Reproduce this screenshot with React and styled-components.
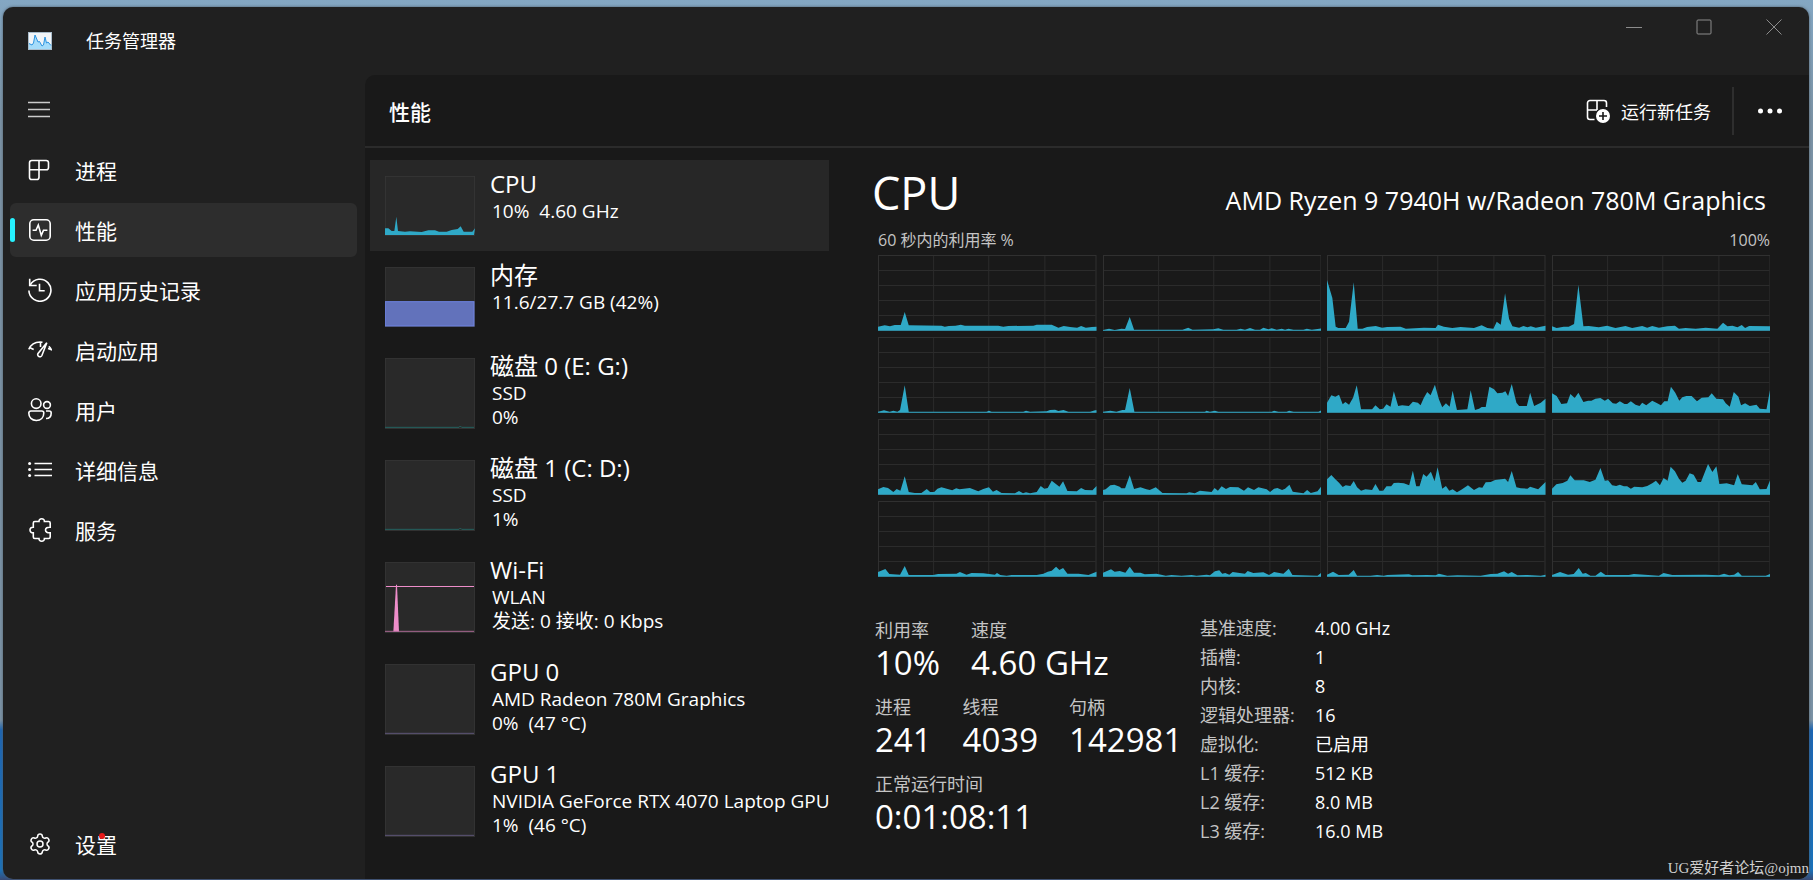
import React, { useState } from 'react';
import styled, { createGlobalStyle, css } from 'styled-components';
import { Settings } from 'lucide-react';

const GlobalStyle = createGlobalStyle`
    * { box-sizing: border-box; }
    body {
        margin: 0;
        background: linear-gradient(#84a7c3 0, #7c93a5 120px, #7c93a5 720px, #1c66b4 730px, #1b72ba 870px, #3a4a74 880px);
        color: #fff;
        font-family: "Open Sans", "Noto Sans CJK SC", sans-serif;
        font-size: 18px;
    }
    button {
        margin: 0;
        padding: 0;
        border: 0;
        background: none;
        color: inherit;
        font: inherit;
        text-align: left;
    }
`;

const navItems = [
    { id: 'processes', label: '进程' },
    { id: 'performance', label: '性能' },
    { id: 'history', label: '应用历史记录' },
    { id: 'startup', label: '启动应用' },
    { id: 'users', label: '用户' },
    { id: 'details', label: '详细信息' },
    { id: 'services', label: '服务' },
];

const resources = [
    { id: 'cpu', title: 'CPU', lines: ['10%  4.60 GHz'] },
    { id: 'memory', title: '内存', lines: ['11.6/27.7 GB (42%)'] },
    { id: 'disk0', title: '磁盘 0 (E: G:)', lines: ['SSD', '0%'] },
    { id: 'disk1', title: '磁盘 1 (C: D:)', lines: ['SSD', '1%'] },
    { id: 'wifi', title: 'Wi-Fi', lines: ['WLAN', '发送: 0 接收: 0 Kbps'] },
    { id: 'gpu0', title: 'GPU 0', lines: ['AMD Radeon 780M Graphics', '0%  (47 °C)'] },
    { id: 'gpu1', title: 'GPU 1', lines: ['NVIDIA GeForce RTX 4070 Laptop GPU', '1%  (46 °C)'] },
];

const stats = [
    [{ label: '利用率', value: '10%' }, { label: '速度', value: '4.60 GHz' }],
    [{ label: '进程', value: '241' }, { label: '线程', value: '4039' }, { label: '句柄', value: '142981' }],
    [{ label: '正常运行时间', value: '0:01:08:11' }],
];

const specs = [
    ['基准速度:', '4.00 GHz'],
    ['插槽:', '1'],
    ['内核:', '8'],
    ['逻辑处理器:', '16'],
    ['虚拟化:', '已启用'],
    ['L1 缓存:', '512 KB'],
    ['L2 缓存:', '8.0 MB'],
    ['L3 缓存:', '16.0 MB'],
];

// one line per logical processor, "x,height" on a 654 x 228 field
const cores = [
    '0,12 20,16 36,13 50,17 68,17 80,56 92,16 190,15 200,12 212,14 232,15 248,18 260,15 360,15 375,12 390,14 465,15 475,18 520,18 540,9 556,14 575,11 596,9 608,14 622,9 640,11 654,12',
    '0,2 18,6 35,2 55,6 66,5 80,41 93,3 238,3 255,9 268,3 330,4 345,7 360,3 400,3 412,6 425,3 440,8 455,3 470,3 480,9 495,4 505,7 520,3 535,6 545,3 555,6 570,3 600,3 610,6 625,3 642,5 654,7',
    '0,152 16,98 26,12 34,8 56,8 66,27 80,145 92,6 106,6 120,11 146,14 165,9 180,11 220,12 236,6 290,9 325,8 332,18 350,12 375,8 400,11 440,8 463,16 480,8 498,6 508,27 520,18 533,112 545,35 555,13 575,9 588,14 600,10 610,13 625,9 654,15',
    '0,13 14,8 35,12 50,12 66,20 79,137 94,13 110,14 140,10 165,15 190,8 220,14 240,8 270,14 285,9 300,14 320,9 345,13 368,15 380,6 400,8 430,6 460,9 495,6 512,24 525,13 540,15 555,10 568,17 578,8 590,14 654,13',
    '0,3 18,7 35,3 46,6 58,3 66,8 80,82 92,3 325,3 332,6 340,3 435,3 443,6 455,3 505,4 515,8 530,9 540,5 555,8 570,3 635,3 650,7 654,7',
    '0,3 22,6 40,3 58,8 66,8 80,74 94,3 305,3 310,6 320,3 335,6 345,3 505,3 512,6 525,3 550,3 557,6 570,3 645,3 654,7',
    '0,30 13,52 25,48 36,54 47,25 55,32 66,24 78,45 89,82 102,10 135,10 145,22 158,10 168,12 178,25 190,18 200,64 213,20 225,22 245,20 257,33 272,30 280,22 290,45 300,62 310,52 323,84 335,40 345,16 356,28 367,18 376,66 389,8 420,10 430,67 443,8 455,12 463,17 475,17 486,78 500,70 510,58 525,60 534,64 542,50 553,86 567,30 575,20 598,20 608,60 620,20 640,30 654,42',
    '0,58 14,50 28,26 45,28 55,56 68,44 79,60 94,32 108,36 118,36 130,42 145,44 158,36 168,42 182,28 192,27 203,34 217,26 225,26 236,34 250,24 262,20 270,30 282,22 300,36 315,28 326,22 336,34 346,34 356,78 369,60 381,36 390,46 402,50 418,50 434,34 448,45 468,46 478,58 492,42 512,40 520,28 532,18 544,62 558,48 566,22 578,28 592,20 612,24 622,12 642,10 654,76',
    '0,16 16,23 30,20 46,8 56,17 67,12 80,55 92,8 110,5 130,5 146,17 156,8 168,8 178,18 190,22 222,13 234,19 244,16 275,20 300,10 315,17 332,22 344,9 355,14 370,5 410,4 422,11 434,4 443,7 455,4 475,8 487,26 498,18 508,20 520,42 543,24 554,40 567,11 595,10 608,20 620,14 642,13 654,26',
    '0,14 8,16 22,28 34,30 50,24 55,19 66,19 80,58 93,17 112,22 130,16 140,14 158,22 178,5 250,4 258,7 275,4 290,12 325,8 334,20 344,12 355,25 368,17 380,23 405,22 422,12 434,22 452,14 465,22 490,16 500,8 512,18 522,20 536,14 545,18 558,30 568,9 600,4 611,14 622,5 642,10 654,26',
    '0,46 13,59 25,46 36,36 47,23 56,28 70,26 80,41 90,22 102,12 115,16 135,14 145,32 157,12 168,12 178,25 192,25 200,35 213,36 230,34 246,28 257,72 267,25 277,25 288,62 298,54 311,69 322,40 331,82 345,18 356,26 366,12 376,16 389,7 402,15 422,28 440,14 455,22 465,21 475,37 490,38 503,44 533,48 542,38 553,71 567,22 580,19 600,18 608,24 632,16 654,38',
    '0,18 13,31 32,35 46,42 55,58 68,43 95,43 113,38 130,45 145,80 158,42 168,43 180,28 192,26 203,30 215,25 225,25 236,18 246,24 270,22 285,26 300,34 311,42 323,28 334,50 346,42 355,84 368,70 380,48 390,36 400,42 412,64 424,60 436,38 446,38 467,92 480,68 492,85 501,32 523,34 545,28 556,62 568,31 600,28 610,38 622,16 642,17 654,46',
    '0,14 22,23 34,8 66,6 80,32 92,5 165,5 180,8 235,9 245,14 265,6 280,11 315,10 350,6 356,11 366,5 385,3 400,5 475,5 495,9 508,15 520,18 533,30 543,20 554,26 567,9 600,9 630,5 654,15',
    '0,12 24,22 35,15 50,17 67,12 80,30 93,12 112,12 125,7 160,9 188,3 205,5 235,3 265,5 280,3 310,6 320,4 335,16 348,19 357,9 366,11 378,6 388,14 425,9 433,17 450,11 480,13 497,5 512,14 540,9 556,24 567,5 642,3 654,12',
    '0,6 18,15 35,5 65,6 80,20 90,3 130,3 150,5 170,3 180,5 245,7 255,4 300,5 325,4 335,9 360,3 390,4 460,3 490,8 510,9 530,16 542,9 553,14 570,4 600,5 640,3 654,6',
    '0,5 24,14 48,6 65,8 80,26 92,9 101,11 115,3 130,3 146,15 160,5 230,5 245,8 320,3 334,11 360,5 460,6 500,4 515,9 530,4 545,6 557,14 568,3 640,3 654,9',
];

const cpuHistory = '0,20 10,20 20,12 28,12 34,55 39,12 60,10 75,11 110,9 130,14 150,14 162,10 185,10 200,15 218,18 227,26 236,10 262,10 270,20';

// turns "x,height" pairs into a closed area that stands on the bottom edge
const toArea = (data, width, height) => {
    const top = data.split(' ').map((pair) => {
        const [x, h] = pair.split(',');
        return `${x},${height - h}`;
    });
    return `0,${height} ${top.join(' ')} ${width},${height}`;
};

const NavIcon = ({ id }) => (
    <Glyph viewBox="0 0 24 24" aria-hidden="true">
        {id === 'processes' && (
            <path d="M3.8 2.5h14.4a2.3 2.3 0 0 1 2.3 2.3v4.7a2.3 2.3 0 0 1-2.3 2.3H11v7.4a2.3 2.3 0 0 1-2.3 2.3H3.8a2.3 2.3 0 0 1-2.3-2.3V4.8a2.3 2.3 0 0 1 2.3-2.3zM1.5 11.8H11V2.5" />
        )}
        {id === 'performance' && (
            <>
                <rect x="1.8" y="1.8" width="20.4" height="20.4" rx="4" />
                <path d="M4.6 12.3H8L10.3 7l3 10.4 2.2-5.1h3.9" />
            </>
        )}
        {id === 'history' && (
            <>
                <path d="M.9 12.5A11 11 0 1 0 2.2 7" />
                <path d="M1.7.8v6.7h7M11.5 5.7v7h5.2" />
            </>
        )}
        {id === 'startup' && (
            <>
                <path d="M.8 11.4C3 6.2 7.6 3.4 14.5 4.2M1.5 9.6l4.2 1.8M12.5 4v5M20.8 8.4c1.100.9 1.900 2 2.500 3.200l-3.300-1" />
                <path d="M18.8 4.8 10 15.5c-1.500 2.600 2.600 4.700 3.900 2z" />
            </>
        )}
        {id === 'users' && (
            <>
                <circle cx="8.2" cy="5.6" r="4.8" />
                <circle cx="19" cy="7" r="3.4" />
                <path d="M.8 15a2 2 0 0 1 2-2h11a2 2 0 0 1 2 2c0 4.5-3 7.5-7.5 7.5S.8 19.5.8 15zM18 13h3.2a2 2 0 0 1 2 2c0 3.5-2 5.5-5.2 5.5" />
            </>
        )}
        {id === 'details' && (
            <>
                <path d="M6.5 5.5H24M6.5 11.5H24M6.5 17.5H24" />
                <g fill="currentColor" stroke="none">
                    <circle cx="1.6" cy="5.500" r="1.5" />
                    <circle cx="1.6" cy="11.500" r="1.5" />
                    <circle cx="1.6" cy="17.500" r="1.5" />
                </g>
            </>
        )}
        {id === 'services' && (
            <path d="M6.8 3.5H11C10.9 1.800 12 .8 13.7.8s2.800 1 2.700 2.700h4.300a1.500 1.500 0 0 1 1.500 1.500v4.200c-2.800-.2-4.700.9-4.700 2.800s1.900 3 4.700 2.800v4.200a1.500 1.500 0 0 1-1.500 1.500h-4.300c.1 1.700-1 2.700-2.700 2.700S10.900 22.200 11 20.500H6.800A1.500 1.500 0 0 1 5.300 19v-4.200C3.200 14.900 2 13.700 2 12s1.200-2.900 3.300-2.800V5a1.500 1.500 0 0 1 1.500-1.500z" />
        )}
    </Glyph>
);

const AppLogo = () => (
    <Glyph viewBox="0 0 24 24" aria-hidden="true" strokeWidth="1">
        <rect x="0" y="3" width="24" height="18" fill="#a9bccb" stroke="none" />
        <rect x="1" y="4" width="22" height="16" fill="#f2f5f8" stroke="none" />
        <path d="M1 14.5 4 16l1.500-2L7 6l3 7 1.500-.5L14 17l1.500-1L17 8l1.500 6 1.500-1 3 3.500V20H1z" fill="#a5dcfa" stroke="none" />
        <path d="M1 14.5 4 16l1.500-2L7 6l3 7 1.500-.5L14 17l1.500-1L17 8l1.500 6 1.500-1 3 3.500" stroke="#2b93e0" />
    </Glyph>
);

const MiniChart = ({ id, tall }) => {
    const h = tall ? 213 : 180;
    return (
        <Thumb viewBox={`0 0 270 ${h}`} preserveAspectRatio="none" $tall={tall} aria-hidden="true">
            <rect x="1" y="1" width="268" height={h - 3} fill="#292929" stroke="#363636" strokeWidth="3" />
            {id === 'cpu' && <polygon points={toArea(cpuHistory, 267, 177)} fill="#2fa9c7" />}
            {id === 'memory' && <rect x="1" y="104" width="266" height="73" fill="#6272bb" stroke="#6e83e3" strokeWidth="3" />}
            {(id === 'disk0' || id === 'disk1') && (
                <path d={`M0 ${h - 5}H222l4-4 4 4H267`} stroke="#23625f" strokeWidth="3" fill="none" />
            )}
            {id === 'wifi' && (
                <>
                    <path d={`M25 ${h - 3} 33 68h3L42 ${h - 3}z`} fill="#ee8dca" />
                    <path d="M3 73.5H267" stroke="#ee8dca" strokeWidth="3" />
                    <path d={`M0 ${h - 5}H267`} stroke="#a86791" strokeWidth="3" />
                </>
            )}
            {(id === 'gpu0' || id === 'gpu1') && <path d={`M0 ${h - 5}H267`} stroke="#5d5577" strokeWidth="3" />}
        </Thumb>
    );
};

const CoreChart = ({ data }) => (
    <CoreSvg viewBox="0 0 654 228" preserveAspectRatio="none" aria-hidden="true">
        <path d="M0 46.5H651M0 91.5H651M0 136.5H651M0 181.5H651M166.5 0V225M331.5 0V225M499.5 0V225" stroke="#2b2b2b" strokeWidth="3" />
        <rect x="1.5" y="1.5" width="651" height="225" fill="none" stroke="#303030" strokeWidth="3" />
        <polygon points={toArea(data, 654, 227)} fill="#2fa9c7" />
    </CoreSvg>
);

const App = () => {
    const [page, setPage] = useState('performance');
    const [resource, setResource] = useState('cpu');

    return (
        <>
            <GlobalStyle />
            <Window>
                <TitleBar>
                    <AppLogo />
                    <AppName>任务管理器</AppName>
                    <WindowButton aria-label="最小化">
                        <WindowGlyph viewBox="0 0 16 16"><path d="M0 8.5h16" /></WindowGlyph>
                    </WindowButton>
                    <WindowButton aria-label="最大化">
                        <WindowGlyph viewBox="0 0 16 16"><rect x="1" y="1" width="14" height="14" rx="1" /></WindowGlyph>
                    </WindowButton>
                    <WindowButton aria-label="关闭">
                        <WindowGlyph viewBox="0 0 16 16"><path d="M.5.5l15 15M15.5.5l-15 15" /></WindowGlyph>
                    </WindowButton>
                </TitleBar>
                <Body>
                    <Sidebar>
                        <NavButton aria-label="打开导航">
                            <Glyph viewBox="0 0 24 24" stroke="#ccc"><path d="M0 4.5h22M0 11.5h22M0 18.5h22" /></Glyph>
                        </NavButton>
                        {navItems.map((item) => (
                            <NavButton key={item.id} $active={page === item.id} onClick={() => setPage(item.id)}>
                                <NavIcon id={item.id} />
                                <NavLabel>{item.label}</NavLabel>
                            </NavButton>
                        ))}
                        <Spacer />
                        <NavButton onClick={() => setPage('settings')}>
                            <Settings size={24} strokeWidth={1.5} />
                            <NavLabel>设置<RedDot /></NavLabel>
                        </NavButton>
                    </Sidebar>
                    <Main>
                        <Toolbar>
                            <PageTitle>性能</PageTitle>
                            <RunTask>
                                <Glyph viewBox="0 0 24 24" aria-hidden="true">
                                    <path d="M8.5 20.5H4A2.500 2.500 0 0 1 1.500 18V4A2.500 2.500 0 0 1 4 1.500h14A2.500 2.500 0 0 1 20.500 4v4M1.500 11H11M11 1.500V11" />
                                    <circle cx="17" cy="17" r="7" fill="#fff" stroke="none" />
                                    <path d="M17 13v8M13 17h8" stroke="#191919" />
                                </Glyph>
                                运行新任务
                            </RunTask>
                            <More aria-label="更多">
                                <Glyph viewBox="0 0 24 24" fill="currentColor" stroke="none">
                                    <circle cx="2.5" cy="12" r="2.5" />
                                    <circle cx="12" cy="12" r="2.5" />
                                    <circle cx="21.5" cy="12" r="2.5" />
                                </Glyph>
                            </More>
                        </Toolbar>
                        <Content>
                            <ResourceList>
                                {resources.map((item) => (
                                    <Resource
                                        key={item.id}
                                        $tall={item.lines.length > 1}
                                        $active={resource === item.id}
                                        onClick={() => setResource(item.id)}
                                    >
                                        <MiniChart id={item.id} tall={item.lines.length > 1} />
                                        <ResourceText>
                                            <ResourceTitle>{item.title}</ResourceTitle>
                                            {item.lines.map((line) => <ResourceLine key={line}>{line}</ResourceLine>)}
                                        </ResourceText>
                                    </Resource>
                                ))}
                            </ResourceList>
                            <Detail>
                                <DetailHeader>
                                    <DetailTitle>CPU</DetailTitle>
                                    <ModelName>AMD Ryzen 9 7940H w/Radeon 780M Graphics</ModelName>
                                </DetailHeader>
                                <ChartCaption>
                                    <span>60 秒内的利用率 %</span>
                                    <span>100%</span>
                                </ChartCaption>
                                <CoreGrid>
                                    {cores.map((data, i) => <CoreChart key={i} data={data} />)}
                                </CoreGrid>
                                <Facts>
                                    <Stats>
                                        {stats.map((row, i) => (
                                            <StatRow key={i}>
                                                {row.map((stat) => (
                                                    <div key={stat.label}>
                                                        <StatLabel>{stat.label}</StatLabel>
                                                        <StatValue>{stat.value}</StatValue>
                                                    </div>
                                                ))}
                                            </StatRow>
                                        ))}
                                    </Stats>
                                    <SpecTable>
                                        <tbody>
                                            {specs.map(([label, value]) => (
                                                <tr key={label}>
                                                    <SpecLabel scope="row">{label}</SpecLabel>
                                                    <SpecValue>{value}</SpecValue>
                                                </tr>
                                            ))}
                                        </tbody>
                                    </SpecTable>
                                </Facts>
                            </Detail>
                        </Content>
                    </Main>
                </Body>
            </Window>
            <Watermark>UG爱好者论坛@ojmn</Watermark>
        </>
    );
};

const Window = styled.div`
    display: flex;
    flex-direction: column;
    min-height: calc(100vh - 8px);
    margin: 7px 4px 1px 3px;
    border-radius: 10px;
    background: #202020;
    box-shadow: 0 0 3px #4c5b68;
    overflow: hidden;
`;

const TitleBar = styled.header`
    display: flex;
    align-items: center;
    height: 68px;
    padding-left: 25px;
`;

const AppName = styled.span`
    flex: 1;
    padding: 0 0 2px 34px;
`;

const WindowButton = styled.button`
    display: flex;
    align-items: center;
    justify-content: center;
    align-self: flex-start;
    width: 70px;
    height: 40px;
`;

const WindowGlyph = styled.svg`
    width: 16px;
    height: 16px;
    fill: none;
    stroke: #8c8c8c;
`;

const Glyph = styled.svg.attrs((props) => ({
    fill: props.fill || 'none',
    stroke: props.stroke || 'currentColor',
    strokeWidth: props.strokeWidth || 1.6,
}))`
    flex: none;
    width: 24px;
    height: 24px;
`;

const Body = styled.div`
    display: flex;
    flex: 1;
`;

const Sidebar = styled.nav`
    display: flex;
    flex-direction: column;
    gap: 6px;
    flex: none;
    width: 362px;
    padding: 8px 8px 8px 7px;
`;

const NavButton = styled.button`
    position: relative;
    display: flex;
    align-items: center;
    gap: 23px;
    height: 54px;
    padding-left: 18px;
    border-radius: 6px;

    ${({ $active }) => $active && css`
        background: #2d2d2d;

        &::before {
            content: '';
            position: absolute;
            left: 0;
            width: 5px;
            height: 24px;
            border-radius: 3px;
            background: #26f2ff;
        }
    `}
`;

const NavLabel = styled.span`
    position: relative;
    font-size: 21px;
`;

const RedDot = styled.i`
    position: absolute;
    top: 4px;
    right: 12px;
    width: 6px;
    height: 6px;
    border-radius: 50%;
    background: #e81a1a;
`;

const Spacer = styled.div`
    flex: 1;
`;

const Main = styled.main`
    flex: 1;
    min-width: 0;
    border-top-left-radius: 10px;
    background: #191919;
`;

const Toolbar = styled.div`
    display: flex;
    align-items: center;
    height: 73px;
    padding-left: 24px;
    border-bottom: 2px solid #2b2b2b;
`;

const PageTitle = styled.h1`
    flex: 1;
    margin: 0;
    font-size: 21px;
    font-weight: 500;
`;

const RunTask = styled.button`
    display: flex;
    align-items: center;
    gap: 11px;
    height: 48px;
    padding-right: 21px;
    border-right: 2px solid #2e2e2e;
`;

const More = styled.button`
    display: flex;
    align-items: center;
    justify-content: center;
    width: 75px;
    height: 48px;
    padding-right: 3px;
`;

const Content = styled.div`
    display: flex;
    padding: 12px 39px 0 5px;
`;

const ResourceList = styled.div`
    flex: none;
    width: 459px;
`;

const Resource = styled.button`
    display: flex;
    gap: 15px;
    width: 100%;
    height: ${({ $tall }) => ($tall ? '102px' : '91px')};
    padding-left: 15px;
    background: ${({ $active }) => ($active ? '#272727' : 'transparent')};
`;

const Thumb = styled.svg`
    flex: none;
    width: 90px;
    height: ${({ $tall }) => ($tall ? '71px' : '60px')};
    margin-top: 16px;
`;

const ResourceText = styled.div`
    padding-top: 9px;
    white-space: pre;
`;

const ResourceTitle = styled.div`
    font-size: 24px;
    line-height: 30px;
`;

const ResourceLine = styled.div`
    padding-left: 2px;
    font-size: 19px;
    line-height: 24px;
`;

const Detail = styled.section`
    flex: 1;
    min-width: 0;
    padding-left: 43px;
`;

const DetailHeader = styled.div`
    display: flex;
    align-items: baseline;
    justify-content: space-between;
    height: 68px;
    padding-right: 4px;
`;

const DetailTitle = styled.h2`
    margin: 0;
    font-size: 45px;
    font-weight: 400;
    line-height: 66px;
`;

const ModelName = styled.span`
    font-size: 25px;
`;

const ChartCaption = styled.div`
    display: flex;
    justify-content: space-between;
    padding: 0 0 3px 6px;
    color: #c4c4c4;
    font-size: 16px;
    line-height: 24px;
`;

const CoreGrid = styled.div`
    display: grid;
    grid-template-columns: repeat(4, 1fr);
    gap: 6px;
    padding-left: 6px;
`;

const CoreSvg = styled.svg`
    display: block;
    width: 100%;
    height: 76px;
`;

const Facts = styled.div`
    display: flex;
    align-items: flex-start;
    padding-top: 37px;
`;

const Stats = styled.div`
    flex: none;
    width: 328px;
    padding: 4px 0 0 3px;
`;

const StatRow = styled.dl`
    display: flex;
    gap: 31px;
    margin: 0 0 12px;
`;

const StatLabel = styled.dt`
    color: #c4c4c4;
    font-size: 18px;
    line-height: 24px;
`;

const StatValue = styled.dd`
    margin: 0;
    font-size: 33px;
    line-height: 41px;
`;

const SpecTable = styled.table`
    border-collapse: collapse;
    font-size: 18px;
    line-height: 29px;
`;

const SpecLabel = styled.th`
    width: 115px;
    padding: 0;
    color: #c4c4c4;
    font-weight: 400;
    text-align: left;
`;

const SpecValue = styled.td`
    padding: 0;
`;

const Watermark = styled.div`
    position: absolute;
    right: 4px;
    bottom: 1px;
    color: #d0d0d0;
    font-family: "Liberation Serif", "Noto Sans CJK SC", serif;
    font-size: 15px;
    line-height: 22px;
`;

export default App;
